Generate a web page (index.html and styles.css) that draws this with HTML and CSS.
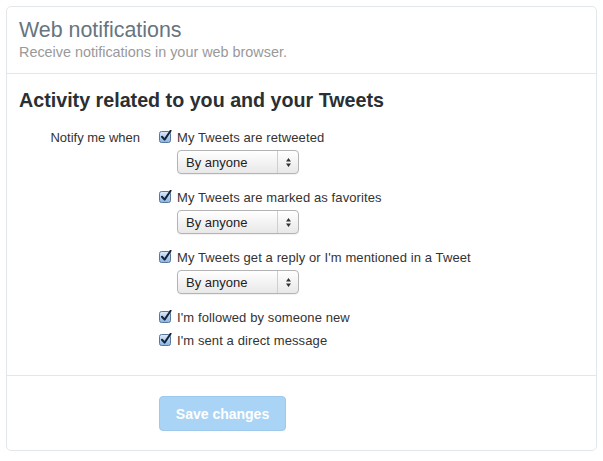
FILE: index.html
```html
<!DOCTYPE html>
<html>
<head>
<meta charset="utf-8">
<link rel="stylesheet" href="styles.css">
</head>
<body>
<div class="card">
  <div class="header">
    <h1 class="title">Web notifications</h1>
    <div class="subtitle">Receive notifications in your web browser.</div>
  </div>
  <div class="section">
    <h2 class="heading">Activity related to you and your Tweets</h2>
    <div class="form-row">
      <div class="label">Notify me when</div>
      <div class="options">
        <div class="check-row">
          <svg class="cb" width="13" height="13" viewBox="0 0 13 13"><defs><linearGradient id="g1" x1="0" y1="0" x2="0" y2="1"><stop offset="0" stop-color="#dfeafa"/><stop offset="1" stop-color="#86b3e3"/></linearGradient></defs><rect x="0.5" y="1.5" width="11" height="11" rx="2" fill="url(#g1)" stroke="#58779c"/><path d="M3 6.8 L5.6 9.6 L11.6 0.8" fill="none" stroke="#17233a" stroke-width="2" stroke-linecap="round" stroke-linejoin="round"/></svg>
          <span>My Tweets are retweeted</span>
        </div>
        <div class="select"><span class="sel-text">By anyone</span><span class="sel-arrows"><svg width="7" height="11" viewBox="0 0 7 11"><path d="M3.5 1 L6 4.5 L1 4.5 Z M3.5 10 L6 6.5 L1 6.5 Z" fill="#333"/></svg></span></div>
        <div class="check-row">
          <svg class="cb" width="13" height="13" viewBox="0 0 13 13"><rect x="0.5" y="1.5" width="11" height="11" rx="2" fill="url(#g1)" stroke="#58779c"/><path d="M3 6.8 L5.6 9.6 L11.6 0.8" fill="none" stroke="#17233a" stroke-width="2" stroke-linecap="round" stroke-linejoin="round"/></svg>
          <span>My Tweets are marked as favorites</span>
        </div>
        <div class="select"><span class="sel-text">By anyone</span><span class="sel-arrows"><svg width="7" height="11" viewBox="0 0 7 11"><path d="M3.5 1 L6 4.5 L1 4.5 Z M3.5 10 L6 6.5 L1 6.5 Z" fill="#333"/></svg></span></div>
        <div class="check-row">
          <svg class="cb" width="13" height="13" viewBox="0 0 13 13"><rect x="0.5" y="1.5" width="11" height="11" rx="2" fill="url(#g1)" stroke="#58779c"/><path d="M3 6.8 L5.6 9.6 L11.6 0.8" fill="none" stroke="#17233a" stroke-width="2" stroke-linecap="round" stroke-linejoin="round"/></svg>
          <span>My Tweets get a reply or I'm mentioned in a Tweet</span>
        </div>
        <div class="select"><span class="sel-text">By anyone</span><span class="sel-arrows"><svg width="7" height="11" viewBox="0 0 7 11"><path d="M3.5 1 L6 4.5 L1 4.5 Z M3.5 10 L6 6.5 L1 6.5 Z" fill="#333"/></svg></span></div>
        <div class="check-row">
          <svg class="cb" width="13" height="13" viewBox="0 0 13 13"><rect x="0.5" y="1.5" width="11" height="11" rx="2" fill="url(#g1)" stroke="#58779c"/><path d="M3 6.8 L5.6 9.6 L11.6 0.8" fill="none" stroke="#17233a" stroke-width="2" stroke-linecap="round" stroke-linejoin="round"/></svg>
          <span>I'm followed by someone new</span>
        </div>
        <div class="check-row">
          <svg class="cb" width="13" height="13" viewBox="0 0 13 13"><rect x="0.5" y="1.5" width="11" height="11" rx="2" fill="url(#g1)" stroke="#58779c"/><path d="M3 6.8 L5.6 9.6 L11.6 0.8" fill="none" stroke="#17233a" stroke-width="2" stroke-linecap="round" stroke-linejoin="round"/></svg>
          <span>I'm sent a direct message</span>
        </div>
      </div>
    </div>
  </div>
  <div class="footer">
    <button class="save" disabled>Save changes</button>
  </div>
</div>
</body>
</html>
```
FILE: styles.css
```css
html, body {
  margin: 0;
  padding: 0;
  background: #fff;
}
body {
  font-family: "Liberation Sans", Arial, sans-serif;
  color: #333;
}
.card {
  margin: 6px 6px 0 6px;
  border: 1px solid #e1e8ed;
  border-radius: 5px;
}
.header {
  padding: 10px 12px 12px 12px;
}
.title {
  margin: 0;
  font-size: 21.4px;
  line-height: 26px;
  font-weight: normal;
  color: #66757f;
}
.subtitle {
  font-size: 14.4px;
  line-height: 18px;
  color: #999;
}
.section {
  border-top: 1px solid #e1e8ed;
  padding: 14px 12px 25px 12px;
}
.heading {
  margin: 0 0 15px 0;
  font-size: 19.7px;
  line-height: 24px;
  font-weight: bold;
  color: #292f33;
}
.form-row {
  display: flex;
}
.label {
  width: 140px;
  box-sizing: border-box;
  padding: 1px 19px 0 0;
  text-align: right;
  font-size: 13px;
  line-height: 20px;
  color: #333;
}
.options {
  display: flex;
  flex-direction: column;
  gap: 3px;
}
.check-row {
  display: flex;
  align-items: center;
  height: 20px;
  gap: 5px;
  font-size: 13px;
  letter-spacing: 0.1px;
  color: #333;
}
.cb {
  flex: none;
  margin-top: -1px;
}
.select {
  display: flex;
  align-items: center;
  margin: 0 0 10px 18px;
  width: 122px;
  height: 24px;
  box-sizing: border-box;
  border: 1px solid #b4b4b4;
  border-radius: 4px;
  background: linear-gradient(#ffffff, #e8e8e8);
  box-shadow: 0 1px 1px rgba(0,0,0,0.06);
  font-size: 13px;
  color: #222;
}
.sel-text {
  flex: 1;
  padding-left: 8px;
}
.sel-arrows {
  display: flex;
  align-items: center;
  justify-content: center;
  width: 20px;
  height: 100%;
  border-left: 1px solid #cfcfcf;
}
.footer {
  border-top: 1px solid #e1e8ed;
  padding: 20px 0 19px 152px;
}
.save {
  display: block;
  width: 127px;
  height: 35px;
  border: 1px solid #9cc9ec;
  border-radius: 4px;
  background: #a9d4f5;
  color: #fff;
  font-family: "Liberation Sans", Arial, sans-serif;
  font-size: 14px;
  font-weight: bold;
  padding: 0;
}
```
